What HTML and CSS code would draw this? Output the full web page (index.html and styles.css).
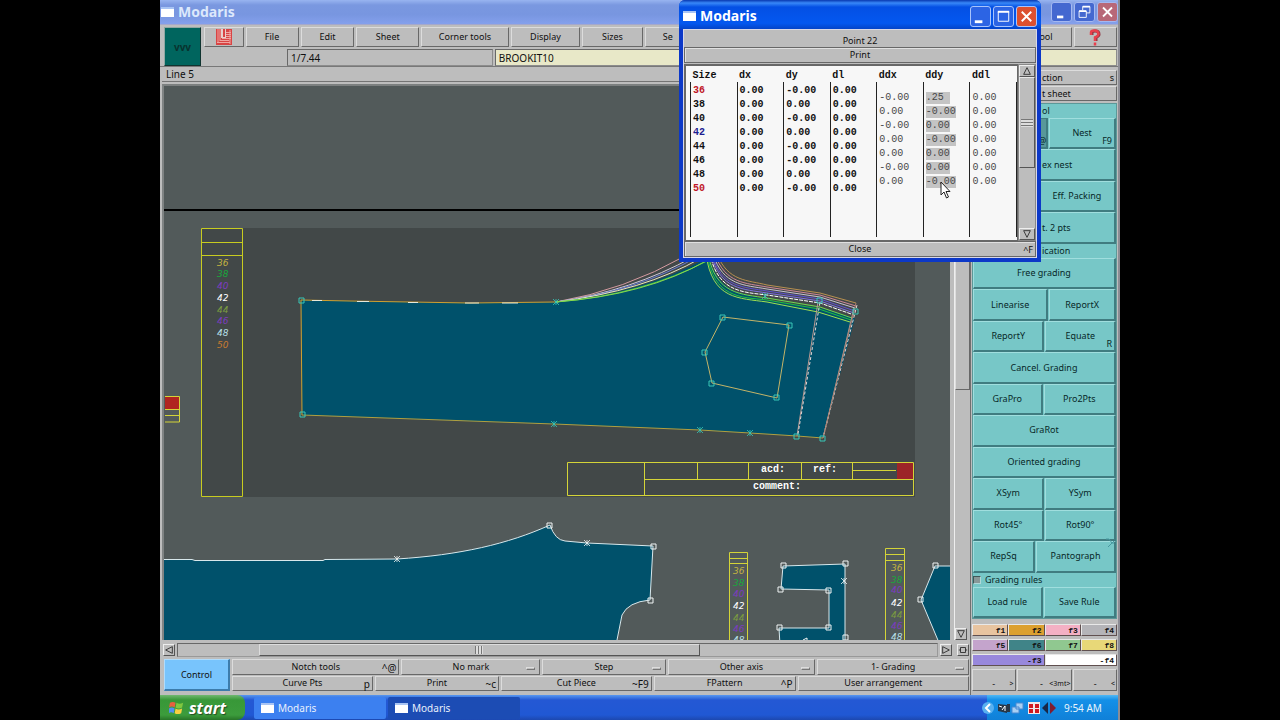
FILE: index.html
```html
<!DOCTYPE html>
<html lang="en">
<head>
<meta charset="utf-8">
<title>Modaris</title>
<link rel="stylesheet" href="styles.css">
</head>
<body>
<div class="screen">
  <header class="titlebar">
    <span class="winicon"></span><h1 class="title">Modaris</h1>
    <div class="winbtns">
      <button class="wb" aria-label="Minimize"><svg viewBox="0 0 20 20"><path d="M5 14h7v3H5z"/></svg></button>
      <button class="wb" aria-label="Restore"><svg viewBox="0 0 20 20"><path class="ln" d="M8 8V4h8v7h-4M4 9h8v7H4z"/><path d="M4 8h8v2H4zM8 3h8v2H8z"/></svg></button>
      <button class="wb close" aria-label="Close window"><svg viewBox="0 0 20 20"><path class="x" d="M5 5l10 10M15 5L5 15"/></svg></button>
    </div>
  </header>

  <div class="top">
    <div class="vvv">vvv</div>
    <nav class="menu">
      <button class="b m-logo" aria-label="Lectra"><svg viewBox="0 0 16 16"><path fill="#d84444" d="M0 0h16v16H0z"/><path stroke="#f0a4a0" fill="none" d="M2 0v14M4 0v12M14 1v14M1 13.500h13M4 11.500h9M10 3.500h5M10 5.500h5M10 7.500h5M6 9.500h9"/><path fill="#e8d0cc" d="M5 0h2v8h2V0h1v9H5z"/></svg></button>
      <button class="b m-file">File</button><button class="b m-edit">Edit</button><button class="b m-sheet">Sheet</button><button class="b m-corner">Corner tools</button><button class="b m-disp">Display</button><button class="b m-sizes">Sizes</button><button class="b m-se">Se</button><button class="b m-tool">ool</button>
      <button class="b m-help" aria-label="Help"><svg viewBox="0 0 12 17"><path fill="none" stroke="#8c3440" stroke-width="3" d="M3 6V3.500Q3 2 6.500 2T10 5.500Q10 7 7 8.500V12"/><path fill="none" stroke="#e8404c" stroke-width="2.500" d="M2 6V3.500Q2 1.500 5.500 1.500T9.500 5Q9.500 7 6 8.500V12M6 13.500v3"/></svg></button>
    </nav>
    <div class="fields">
      <input class="f1" aria-label="Scale" value="1/7.44">
      <input class="f2" aria-label="Model" value="BROOKIT10">
    </div>
  </div>

  <div class="work">
    <main class="left">
      <div class="status">Line 5</div>
      <div class="view">
        <svg class="canvas" viewBox="164 86 786 554" preserveAspectRatio="xMinYMin slice">
          <defs>
            <path id="sq" d="M-3-3h5v5h-5z" fill="none"/>
            <path id="st" d="M-3-3l6 6M3-3l-6 6M0-3v6" fill="none" stroke-width=".8"/>
          </defs>
          <rect x="164" y="86" width="786" height="554" fill="#525a5a"/>
          <path d="M164 210h786" stroke="#000" stroke-width="2"/>
          <rect x="201" y="228" width="714" height="269" fill="#424848"/>
          <path d="M201.500 228.500h41v268h-41zM201 242.500h41M201 255.500h41" fill="none" stroke="#c8cc20"/>
          <g class="sizes">
            <text x="217" y="266" fill="#c4b440">36</text><text x="217" y="277" fill="#18a83c">38</text><text x="217" y="289" fill="#7c3cc0">40</text><text x="217" y="301" fill="#fff">42</text><text x="217" y="313" fill="#7c9c40">44</text><text x="217" y="324" fill="#7c3cc0">46</text><text x="217" y="336" fill="#b8e0e8">48</text><text x="217" y="348" fill="#c87c30">50</text>
          </g>
          <rect x="165" y="396" width="14" height="13" fill="#b02420"/>
          <path d="M165 396.500h14.500v25.500H165M165 409.500h14M165 415.500h14" fill="none" stroke="#d4d438"/>

          <path d="M301 300L410 302L470 303L556 302Q640 294 709 257Q716 284 737 292L767 300L820 308L855 318L823 438L797 436L750 433L700 430L554 424L302 415z" fill="#00516b"/>
          <g fill="none" stroke-width="1">
            <path stroke="#d49aa0" d="M556 302Q625 290 685 256"/><path stroke="#d0c8d8" d="M556 302Q632 291 693 257"/><path stroke="#6478d0" d="M556 302Q638 291 697 257"/><path stroke="#e8e8c0" d="M556 302Q644 291 701 258"/><path stroke="#48c840" d="M556 302Q642 295 709 260"/><path stroke="#88d850" d="M556 302Q646 295 706 261"/>
            <path stroke="#b89050" d="M717 254C728 282 748 280 767 285L820 293L856 303"/>
            <path stroke="#d08898" d="M715 254C725 284 746 283 767 287L820 295L856 306"/>
            <path stroke="#c8c0d0" d="M713 254C723 286 745 285 767 289L820 297L855 308"/>
            <path stroke="#6050d0" d="M712 254C721 288 744 287 767 291L820 299L855 311"/>
            <path stroke="#8070e0" d="M711 254C720 290 743 289 767 293L820 301L854 313"/>
            <path stroke="#fff" stroke-dasharray="4 1" d="M710 254C718 292 742 292 767 295L820 303L854 315"/>
            <path stroke="#70d850" d="M708 254C716 295 741 294 767 298L820 307L852 318"/>
            <path stroke="#20c040" d="M707 254C714 298 740 297 767 300L819 309L851 320"/>
            <path stroke="#a0e050" d="M706 254C712 300 739 298 767 302L818 312L850 322"/>
            <path stroke="#d0a030" d="M302 415L301 300L350 301L410 302L470 303L556 302"/>
            <path stroke="#e8e8d8" d="M312 300.500h10M357 301.500h12M408 302.500h10M465 303h14M502 303h16"/>
            <path stroke="#b0a040" d="M302 415L554 424L700 430L750 433L797 436L823 438"/>
            <path stroke="#c4b468" d="M723 317L789 325L777 398L712 383L705 352z"/>
            <path stroke="#b89890" d="M797 436L818 302M823 438L854 308"/><path stroke="#e4d8d8" stroke-dasharray="3 2" d="M798 434L820 302M824 434L857 305"/><path stroke="#a88070" d="M823 438L856 303"/>
          </g>
          <g stroke="#38c8b8"><use href="#sq" x="302" y="301"/><use href="#sq" x="303" y="415"/><use href="#sq" x="723" y="318"/><use href="#sq" x="790" y="326"/><use href="#sq" x="705" y="353"/><use href="#sq" x="712" y="384"/><use href="#sq" x="777" y="398"/><use href="#sq" x="797" y="437"/><use href="#sq" x="823" y="439"/><use href="#sq" x="856" y="312"/><use href="#sq" x="820" y="301"/><use href="#st" x="556" y="302"/><use href="#st" x="554" y="424"/><use href="#st" x="700" y="430"/><use href="#st" x="750" y="433"/><use href="#st" x="765" y="296"/></g>

          <g fill="none" stroke="#d4d438">
            <path d="M567.500 462.500h346v33h-346zM644.500 462v33M644 479.500h269M697.500 462v17M748.500 462v17M801.500 462v17M852.500 462v17M852 470.500h44"/>
          </g>
          <rect x="897" y="463" width="16" height="16" fill="#9c2428"/>
          <g class="note"><text x="761" y="472">acd:</text><text x="813" y="472">ref:</text><text x="753" y="489">comment:</text></g>

          <path d="M160 559.500H192L195 560.500H323L325 559.500L397 559C460 555 508 544 550 525Q555 540 565 541L587 543L653 546L650 600Q628 602 622 615L617 640V645H160z" fill="#00516b" stroke="#d8e8ec"/>
          <path d="M783 566L845 564V645H780L779 628H829V590L781 589zM935 566H955V645H940L921 600z" fill="#00516b" stroke="#d8e8ec"/>
          <g stroke="#f0f4f4" fill="none"><use href="#st" x="397" y="559"/><use href="#st" x="587" y="543"/><use href="#st" x="844" y="581"/><use href="#sq" x="550" y="526"/><use href="#sq" x="654" y="547"/><use href="#sq" x="651" y="601"/><use href="#sq" x="784" y="566"/><use href="#sq" x="846" y="564"/><use href="#sq" x="781" y="590"/><use href="#sq" x="829" y="591"/><use href="#sq" x="829" y="628"/><use href="#sq" x="780" y="628"/><use href="#sq" x="846" y="638"/><use href="#sq" x="936" y="566"/><use href="#sq" x="921" y="600"/><path d="M803 640l4-2v2"/></g>
          <path d="M729.500 645V552.500h18V645M729 558.500h18M729 563.500h18M885.500 645V548.500h19V645M885 554.500h19M885 560.500h19" fill="none" stroke="#d4d438"/>
          <g class="sizes">
            <text x="733" y="574" fill="#c4b440">36</text><text x="733" y="586" fill="#18a83c">38</text><text x="733" y="597" fill="#7c3cc0">40</text><text x="733" y="609" fill="#fff">42</text><text x="733" y="621" fill="#7c9c40">44</text><text x="733" y="632" fill="#7c3cc0">46</text><text x="733" y="643" fill="#b8e0e8">48</text>
            <text x="891" y="571" fill="#c4b440">36</text><text x="891" y="583" fill="#18a83c">38</text><text x="891" y="593" fill="#7c3cc0">40</text><text x="891" y="606" fill="#fff">42</text><text x="891" y="618" fill="#7c9c40">44</text><text x="891" y="629" fill="#7c3cc0">46</text><text x="891" y="640" fill="#b8e0e8">48</text>
          </g>
        </svg>
        <div class="vscroll"><div class="vthumb"></div><button class="sa" aria-label="Scroll down"><svg viewBox="0 0 12 12"><path d="M2 2h8L6 10z"/></svg></button></div>
      </div>
      <div class="hscroll">
        <button class="sa" aria-label="Scroll left"><svg viewBox="0 0 12 12"><path d="M10 2v8L2 6z"/></svg></button>
        <div class="htrack"><div class="hthumb"><i class="grip"></i></div></div>
        <button class="sa" aria-label="Scroll right"><svg viewBox="0 0 12 12"><path d="M2 2v8l8-4z"/></svg></button>
        <button class="sa corner" aria-label="Fit"><svg viewBox="0 0 12 12"><path d="M3 3h6v6H3zM1 6h2M9 6h2"/></svg></button>
      </div>
      <div class="tools">
        <button class="b control">Control</button>
        <div class="toolrows">
          <div class="row">
            <button class="b w1">Notch tools<span class="key">^@</span></button><button class="b w2">No mark<i class="opt"></i></button><button class="b w3">Step<i class="opt"></i></button><button class="b w4">Other axis<i class="opt"></i></button><button class="b w5">1- Grading<i class="opt"></i></button>
          </div>
          <div class="row">
            <button class="b w6">Curve Pts<span class="key">p</span></button><button class="b w7">Print<span class="key">~c</span></button><button class="b w8">Cut Piece<span class="key">~F9</span></button><button class="b w9">FPattern<span class="key">^P</span></button><button class="b w10">User arrangement</button>
          </div>
        </div>
      </div>
    </main>

    <aside class="side">
      <button class="b g cut">ction<span class="key">s</span></button>
      <button class="b g cut">t sheet</button>
      <div class="teal">
        <div class="lab cutlab">ol</div>
        <div class="row"><button class="b pressed w76">&nbsp;<span class="key">@</span></button><button class="b w67">Nest<span class="key">F9</span></button></div>
        <div class="row"><button class="b cut">ex nest</button></div>
        <div class="row"><button class="b w65" aria-label="Packing"></button><button class="b w78">Eff. Packing</button></div>
        <div class="row"><button class="b cut">t. 2 pts</button></div>
        <div class="lab cutlab">ication</div>
        <div class="row"><button class="b">Free grading</button></div>
        <div class="row"><button class="b w76">Linearise</button><button class="b w67">ReportX</button></div>
        <div class="row"><button class="b w72">ReportY</button><button class="b w71">Equate<span class="key">R</span></button></div>
        <div class="row"><button class="b">Cancel. Grading</button></div>
        <div class="row"><button class="b w70">GraPro</button><button class="b w73">Pro2Pts</button></div>
        <div class="row"><button class="b">GraRot</button></div>
        <div class="row"><button class="b">Oriented grading</button></div>
        <div class="row"><button class="b w72">XSym</button><button class="b w71">YSym</button></div>
        <div class="row"><button class="b w72">Rot45°</button><button class="b w71">Rot90°</button></div>
        <div class="row"><button class="b w62">RepSq</button><button class="b w81">Pantograph<svg class="fold" viewBox="0 0 8 10"><path d="M0 1h3l3 4h2M2 9l6-6" fill="none" stroke="#4898a0"/></svg></button></div>
        <label class="lab rules"><input type="checkbox" class="chk">Grading rules</label>
        <div class="row"><button class="b w70">Load rule</button><button class="b w73">Save Rule</button></div>
      </div>
      <div class="fkeys">
        <button class="fk c1">f1</button><button class="fk c2">f2</button><button class="fk c3">f3</button><button class="fk c4">f4</button>
        <button class="fk c5">f5</button><button class="fk c6">f6</button><button class="fk c7">f7</button><button class="fk c8">f8</button>
        <button class="fk wide c9">-f3</button><button class="fk wide c10">-f4</button>
      </div>
      <div class="foot"><button class="b">-<span class="key">&gt;</span></button><button class="b mid">-<span class="key">&lt;3mt&gt;</span></button><button class="b">-<span class="key">&lt;</span></button></div>
    </aside>
  </div>

  <footer class="taskbar">
    <button class="start"><svg viewBox="0 0 16 16"><path fill="#e86040" d="M1 3q3-2 6 0L6 8Q3 6 0 8z"/><path fill="#80c840" d="M8 3q3 2 7 0l-1 5q-4 2-7 0z"/><path fill="#5090f0" d="M0 9q3-2 6 0l-1 5q-3-2-5 0z"/><path fill="#f8d040" d="M7 9q3 2 7 0l-1 5q-4 2-7 0z"/></svg>start</button>
    <button class="task"><span class="winicon"></span>Modaris</button>
    <button class="task active"><span class="winicon"></span>Modaris</button>
    <div class="tray">
      <svg class="trayicons" viewBox="0 0 76 16"><circle cx="8" cy="8" r="6" fill="#58b0f0"/><path d="M10 4L6 8l4 4" fill="none" stroke="#fff" stroke-width="2"/><path d="M18 4l9 1v8l-9-2z" fill="#283848"/><path d="M19 6l3 1M22 10l3-4v5" stroke="#fff" fill="none"/><path d="M28 4v8M29 12V4" stroke="#283848" stroke-width="2"/><path d="M36 3h7v6h-7zM32 7h7v6h-7z" fill="#a8d0f4" stroke="#4888d0"/><path d="M48 2h12v12H48z" fill="#f0e8e8"/><path d="M49 4h4v4h-4zM55 4h4v4h-4zM49 9h4v4h-4zM55 9h4v4h-4z" fill="#d01820"/><path d="M68 2v12l-6-6z" fill="#182848"/><path d="M70 2v12l6-6z" fill="#801c30"/></svg>
      <span>9:54 AM</span>
    </div>
  </footer>

  <section class="dialog" role="dialog" aria-label="Point 22">
    <div class="dtitle">
      <span class="winicon"></span><h2 class="title">Modaris</h2>
      <div class="winbtns">
        <button class="wb" aria-label="Minimize"><svg viewBox="0 0 20 20"><path d="M4 14h8v3H4z"/></svg></button>
        <button class="wb" aria-label="Maximize"><svg viewBox="0 0 20 20"><path class="ln" d="M4.500 5h11v10h-11z"/><path d="M4 4h12v2H4z"/></svg></button>
        <button class="wb close" aria-label="Close window"><svg viewBox="0 0 20 20"><path class="x" d="M5 5l10 10M15 5L5 15"/></svg></button>
      </div>
    </div>
    <div class="dbody">
      <div class="dname">Point 22</div>
      <button class="b dbtn">Print</button>
      <div class="list">
        <div class="sheet">
        <table class="grid">
          <thead><tr><th>Size</th><th>dx</th><th>dy</th><th>dl</th><th>ddx</th><th>ddy</th><th>ddl</th></tr></thead>
          <tbody>
            <tr class="pad"><td></td><td></td><td></td><td></td><td></td><td></td><td class="last"></td></tr>
            <tr><td rowspan="2" class="red">36</td><td rowspan="2">0.00</td><td rowspan="2">-0.00</td><td rowspan="2">0.00</td><td></td><td></td><td class="last"></td></tr>
            <tr><td rowspan="2" class="d">-0.00</td><td rowspan="2" class="d"><input class="v" aria-label="ddy 36" value=".25"></td><td rowspan="2" class="d last">0.00</td></tr>
            <tr><td rowspan="2">38</td><td rowspan="2">0.00</td><td rowspan="2">0.00</td><td rowspan="2">0.00</td></tr>
            <tr><td rowspan="2" class="d">0.00</td><td rowspan="2" class="d"><input class="v n" aria-label="ddy 38" value="-0.00"></td><td rowspan="2" class="d last">0.00</td></tr>
            <tr><td rowspan="2">40</td><td rowspan="2">0.00</td><td rowspan="2">-0.00</td><td rowspan="2">0.00</td></tr>
            <tr><td rowspan="2" class="d">-0.00</td><td rowspan="2" class="d"><input class="v" aria-label="ddy 40" value="0.00"></td><td rowspan="2" class="d last">0.00</td></tr>
            <tr><td rowspan="2" class="blue">42</td><td rowspan="2">0.00</td><td rowspan="2">0.00</td><td rowspan="2">0.00</td></tr>
            <tr><td rowspan="2" class="d">0.00</td><td rowspan="2" class="d"><input class="v n" aria-label="ddy 42" value="-0.00"></td><td rowspan="2" class="d last">0.00</td></tr>
            <tr><td rowspan="2">44</td><td rowspan="2">0.00</td><td rowspan="2">-0.00</td><td rowspan="2">0.00</td></tr>
            <tr><td rowspan="2" class="d">0.00</td><td rowspan="2" class="d"><input class="v" aria-label="ddy 44" value="0.00"></td><td rowspan="2" class="d last">0.00</td></tr>
            <tr><td rowspan="2">46</td><td rowspan="2">0.00</td><td rowspan="2">-0.00</td><td rowspan="2">0.00</td></tr>
            <tr><td rowspan="2" class="d">-0.00</td><td rowspan="2" class="d"><input class="v" aria-label="ddy 46" value="0.00"></td><td rowspan="2" class="d last">0.00</td></tr>
            <tr><td rowspan="2">48</td><td rowspan="2">0.00</td><td rowspan="2">0.00</td><td rowspan="2">0.00</td></tr>
            <tr><td rowspan="2" class="d">0.00</td><td rowspan="2" class="d"><input class="v n" aria-label="ddy 48" value="-0.00"></td><td rowspan="2" class="d last">0.00</td></tr>
            <tr><td rowspan="2" class="red">50</td><td rowspan="2">0.00</td><td rowspan="2">-0.00</td><td rowspan="2">0.00</td></tr>
            <tr><td></td><td></td><td class="last"></td></tr>
            <tr class="fill"><td></td><td></td><td></td><td></td><td></td><td></td><td class="last"></td></tr>
          </tbody>
        </table>
        </div>
        <div class="dscroll"><button class="sa" aria-label="Scroll up"><svg viewBox="0 0 12 12"><path d="M6 2l4 8H2z"/></svg></button><div class="dthumb"><i class="grip"></i></div><button class="sa" aria-label="Scroll down"><svg viewBox="0 0 12 12"><path d="M2 2h8L6 10z"/></svg></button></div>
      </div>
      <button class="b dbtn">Close<span class="key">^F</span></button>
    </div>
    <svg class="cursor" viewBox="0 0 12 18"><path d="M1 1v13l3-3 2.500 6 2-1L6 10.500h4z" fill="#fff" stroke="#222"/></svg>
  </section>
</div>
</body>
</html>
```
FILE: styles.css
```css
* { box-sizing: border-box; }
html, body { height: 100%; }
body { margin: 0; background: #000; display: flex; justify-content: center; font-family: "Noto Sans", sans-serif; font-size: 9px; line-height: 12px; color: #101010; }
button, input { font: inherit; color: inherit; margin: 0; padding: 0; border-radius: 0; }
svg { display: block; }

.screen { position: relative; width: 75%; min-height: 100%; background: #bdbdbd; display: flex; flex-direction: column; border-right: 2px solid #8c8c94; }

.titlebar { height: 25px; display: flex; align-items: center; gap: 4px; padding: 0 0 0 1px; background: linear-gradient(#98b4f0 0, #7a98e0 5px, #7896e0 60%, #84a0ec); border-bottom: 1px solid #a4a8cc; }
.title { flex: 1; margin: 0; font: bold 14px/18px "Noto Sans", sans-serif; color: #dce8fc; }
.winicon { width: 13px; height: 10px; background: #fff; border-top: 2px solid #a8c4f4; flex: none; }
.winbtns { display: flex; gap: 2px; }
.wb { width: 21px; height: 20px; border: 1px solid #a4b8f0; border-radius: 3px; background: #4468d0; }
.wb svg { width: 100%; height: 100%; }
.wb path { fill: #fff; }
.wb .ln { fill: none; stroke: #fff; stroke-width: 1; }
.wb .x { fill: none; stroke: #fff; stroke-width: 2; }
.wb.close { background: #b86878; }

.b { position: relative; flex: 1 1 0; min-width: 0; border: 1px solid; border-color: #dcdcdc #686868 #686868 #dcdcdc; background: #bdbdbd; text-align: center; line-height: 12px; white-space: nowrap; }
.key { position: absolute; right: 2px; bottom: 0; }
.row { display: flex; gap: 2px; }

.top { display: grid; grid-template-columns: 37px 1fr; grid-template-rows: 20px 17px; column-gap: 3px; row-gap: 2px; padding: 2px 1px 0 4px; border-bottom: 1px solid #787878; }
.vvv { grid-row: 1 / 3; background: #00655e; border: 1px solid; border-color: #90a8a4 #103430 #103430 #90a8a4; display: flex; align-items: center; justify-content: center; color: #08332f; font-size: 10px; font-weight: bold; }
.menu { display: flex; gap: 2px; }
.m-logo svg { width: 16px; height: 16px; margin: 0 auto; }
.m-help svg { width: 12px; height: 17px; margin: 0 auto; }
.m-logo { flex-grow: 39; } .m-file { flex-grow: 53; } .m-edit { flex-grow: 54; } .m-sheet { flex-grow: 63; } .m-corner { flex-grow: 89; } .m-disp { flex-grow: 70; } .m-sizes { flex-grow: 61; }
.m-se { flex-grow: 331; text-align: left; padding-left: 17px; }
.m-tool { flex-grow: 70; text-align: right; padding-right: 18px; } .m-help { flex-grow: 43; }
.fields { display: flex; gap: 2px; padding-left: 83px; }
.fields input { min-width: 0; flex: 1 1 0; height: 17px; border: 1px solid; border-color: #686868 #8c8c8c #8c8c8c #686868; background: #bdbdbd; padding: 0 3px; font-size: 10px; }
.fields .f1 { flex-grow: 201; } .fields .f2 { flex-grow: 624; background: #e8e8c8; }

.work { flex: 1; display: grid; grid-template-columns: 1fr 148px; min-height: 0; }
.left { display: flex; flex-direction: column; padding-left: 2px; min-width: 0; }
.status { height: 15px; padding: 1px 4px; line-height: 12px; border-bottom: 1px solid #747474; font-size: 10px; }
.view { flex: 1; display: flex; gap: 4px; margin-top: 2px; border-left: 2px solid #808484; border-top: 2px solid #7c8080; min-height: 0; }
.canvas { flex: 1; min-width: 0; width: 100%; height: 100%; min-height: 0; }
.sizes { font: italic 9px "DejaVu Sans", sans-serif; }
.note { font: bold 10px "Liberation Mono", monospace; fill: #fff; }
.vscroll { width: 16px; display: flex; flex-direction: column; border-left: 1px solid #eee; }
.vthumb { height: 304px; border: 1px solid; border-color: #ddd #686868 #686868 #ddd; flex: none; }
.vscroll .sa { margin-top: auto; }
.sa { width: 12px; height: 12px; flex: none; border: 1px solid; border-color: #eee #555 #555 #eee; background: #bdbdbd; }
.sa svg { width: 100%; height: 100%; }
.sa path { fill: none; stroke: #222; }
.hscroll { display: flex; align-items: center; gap: 2px; height: 18px; padding: 2px 0 0 1px; }
.htrack { flex: 1; height: 14px; border: 1px solid; border-color: #686868 #999 #999 #686868; padding-left: 10%; }
.hthumb { width: 65%; height: 12px; border: 1px solid; border-color: #ddd #555 #555 #ddd; display: flex; align-items: center; justify-content: center; }
.grip { width: 8px; height: 8px; background: repeating-linear-gradient(90deg, #777 0 1px, #ddd 1px 3px); }
.corner { margin: 0 1px 0 3px; }
.tools { display: flex; gap: 2px; height: 37px; padding: 1px 1px 4px 2px; }
.control { flex: 0 0 66px; background: #78c4fc; border-width: 1px 2px 2px 1px; border-color: #b0dcfc #3c7cac #3c7cac #b0dcfc; }
.toolrows { flex: 1; display: grid; grid-template-rows: 1fr 1fr; gap: 1px; }
.toolrows .key { font-size: 10px; }
.opt { position: absolute; right: 4px; bottom: 4px; width: 9px; height: 3px; border: 1px solid; border-color: #ddd #777 #777 #ddd; }
.w1 { flex-grow: 168; } .w2 { flex-grow: 139; } .w3 { flex-grow: 123; } .w4 { flex-grow: 148; } .w5 { flex-grow: 152; }
.w6 { flex-grow: 141; } .w7 { flex-grow: 124; } .w8 { flex-grow: 151; } .w9 { flex-grow: 142; } .w10 { flex-grow: 172; }

.side { display: flex; flex-direction: column; border-left: 1px solid #707070; padding: 3px 1px 4px 1px; gap: 1px; }
.side .g { flex: 0 0 15px; }
.side .cut { text-align: left; padding-left: 69px; }
.teal { flex: 1; display: flex; flex-direction: column; margin-top: 1px; background: #77c7c7; border: 1px solid #5c9898; }
.teal .row { flex: 1 1 0; gap: 1px; }
.teal .b { background: #77c7c7; border-width: 1px 2px 2px 1px; border-color: #a0dede #407c80 #407c80 #a0dede; color: #082828; }
.teal .cut { padding-left: 68px; }
.teal .pressed { background: #58989a; border-color: #407c80; }
.pressed .key { right: 0; }
.lab { height: 14px; line-height: 14px; color: #082828; }
.cutlab { padding-left: 69px; }
.rules { display: flex; align-items: center; gap: 4px; }
.chk { appearance: none; width: 8px; height: 8px; background: #889898; border: 1px solid; border-color: #405858 #b0d8d8 #b0d8d8 #405858; }
.w62 { flex-grow: 62; } .w65 { flex-grow: 65; } .w67 { flex-grow: 67; } .w70 { flex-grow: 70; } .w71 { flex-grow: 71; } .w72 { flex-grow: 72; } .w73 { flex-grow: 73; } .w76 { flex-grow: 76; } .w78 { flex-grow: 78; } .w81 { flex-grow: 81; }
.fold { position: absolute; right: 0; top: -4px; width: 8px; height: 10px; }
.fkeys { display: grid; grid-template-columns: repeat(4, 1fr); grid-auto-rows: 12px; row-gap: 3px; padding: 4px 0 2px; }
.fk { border: 1px solid; border-color: #e8e8e8 #605050 #605050 #e8e8e8; text-align: right; padding-right: 2px; font: bold 8px/9px "Liberation Mono", monospace; }
.wide { grid-column: span 2; }
.c1 { background: #e8c4a0; } .c2 { background: #dca030; } .c3 { background: #f4b0c4; } .c4 { background: #b4b4b8; }
.c5 { background: #c4a4cc; } .c6 { background: #408488; } .c7 { background: #90c890; } .c8 { background: #e8d878; }
.c9 { background: #9888dc; } .c10 { background: #fff; }
.foot { display: flex; gap: 1px; height: 22px; }
.foot .b { padding-top: 7px; }
.foot .mid { flex-grow: 1.15; padding-right: 6px; }
.foot .key { font-size: 7px; right: 1px; }

.taskbar { height: 25px; display: flex; align-items: stretch; gap: 2px; background: linear-gradient(#5898f0 0, #2458d4 5px, #2058d4 80%, #1c48b0); }
.start { width: 85px; margin-right: 7px; border: 0; border-radius: 0 8px 8px 0; background: linear-gradient(#70b870 0, #389838 5px, #3c9c3c 80%, #287428); color: #fff; font: italic bold 16px/20px "Open Sans", sans-serif; display: flex; align-items: center; gap: 5px; padding-left: 9px; text-shadow: 1px 1px 1px #244c24; }
.start svg { width: 15px; height: 15px; }
.task { width: 132px; margin: 2px 0 1px; border: 0; border-radius: 2px; background: #3c80f0; color: #e8f0fc; font-size: 10px; text-align: left; display: flex; align-items: center; gap: 4px; padding-left: 7px; }
.task.active { background: #1c4cb4; }
.tray { margin-left: auto; width: 131px; background: linear-gradient(#50b8f4 0, #1490e8 5px, #1080d8); color: #e8f4fc; font-size: 10px; display: flex; align-items: center; white-space: nowrap; }
.trayicons { width: 76px; height: 16px; flex: none; margin: 0 8px 0 -7px; }

.dialog { position: absolute; left: 519px; top: 0; width: 362px; display: flex; flex-direction: column; background: #0c38c8; border-radius: 6px 6px 0 0; padding: 0 4px 4px 4px; }
.dtitle { height: 29px; margin: 0 -4px; padding: 3px 4px 0; border-radius: 6px 6px 0 0; background: linear-gradient(#0838b0 0, #3888f8 3px, #0450e4 7px, #0458f0 80%, #0444c8); display: flex; align-items: center; gap: 4px; }
.dtitle .title { color: #fff; }
.dtitle .wb { height: 21px; border-color: #a8c4fc; background: #2c64e4; }
.dtitle .wb.close { background: #dc5030; }
.dbody { background: #bdbdbd; border: 1px solid #d8d8e8; display: flex; flex-direction: column; padding-top: 4px; }
.dname { text-align: center; height: 13px; line-height: 13px; }
.dbtn { flex: none; height: 16px; border-color: #686868; box-shadow: inset 1px 1px #e0e0e0; }
.list { display: flex; height: 177px; margin-top: 1px; }
.sheet { flex: 1; background: #f7f7f7; border: 1px solid #686868; border-width: 2px 1px 1px 2px; padding: 4px 0 0 4px; }
.grid { border-collapse: collapse; table-layout: fixed; width: 100%; font: bold 10px/14px "Liberation Mono", monospace; }
.grid th { text-align: left; height: 12px; line-height: 12px; padding: 0 0 0 2px; }
.grid tr { height: 7px; }
.grid td { padding: 0 0 0 2px; border-left: 1px solid #222; line-height: 14px; vertical-align: top; }
.grid .last { border-right: 1px solid #222; }
.grid .pad { height: 2px; }
.grid .fill { height: 41px; }
.grid .red { color: #c01828; }
.grid .blue { color: #1c1c90; }
.grid .d { font-weight: normal; color: #484848; }
.v { display: block; width: 24px; height: 12px; margin: 1px 0; border: 0; background: #c4c4c4; line-height: 12px; }
.v.n { width: 30px; }
.dscroll { width: 18px; display: flex; flex-direction: column; border: 1px solid #888; }
.dscroll .sa { width: 16px; }
.dthumb { height: 91px; border: 1px solid; border-color: #e8e8e8 #555 #555 #e8e8e8; display: flex; align-items: center; justify-content: center; }
.dscroll .sa:last-child { margin-top: auto; }
.dthumb .grip { width: 12px; background: repeating-linear-gradient(#777 0 1px, #ddd 1px 3px); }
.cursor { position: absolute; left: 261px; top: 181px; width: 12px; height: 18px; }
```
